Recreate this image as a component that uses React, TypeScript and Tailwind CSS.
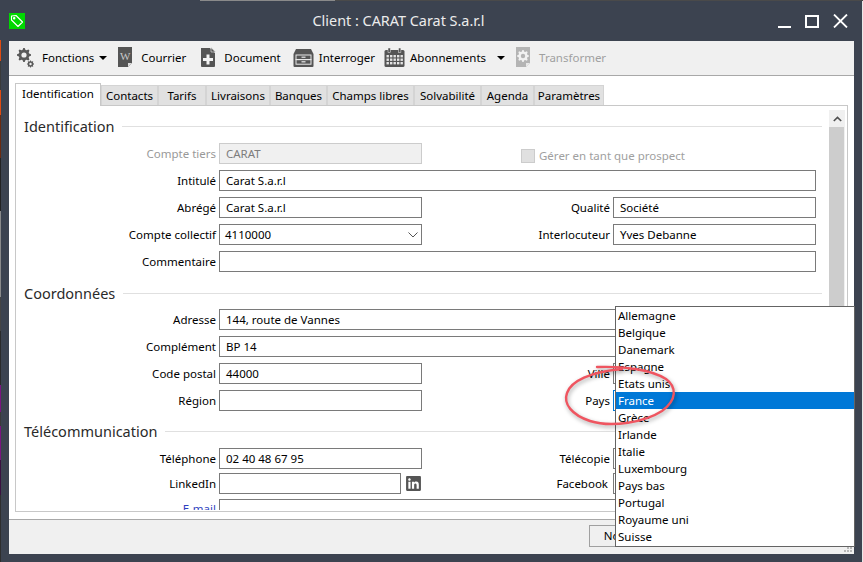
import { FaLinkedin } from 'react-icons/fa';

const gear = (cx: number, cy: number, r: number, teeth = 8) => {
  const pts: string[] = [];
  for (let i = 0; i < teeth * 4; i++) {
    const a = ((i - 0.5) / (teeth * 4)) * Math.PI * 2;
    const rad = i % 4 < 2 ? r : r * 0.76;
    pts.push(`${(cx + Math.cos(a) * rad).toFixed(2)} ${(cy + Math.sin(a) * rad).toFixed(2)}`);
  }
  return 'M' + pts.join('L') + 'Z';
};

const GearsIcon = () => (
  <svg width="17" height="20" viewBox="0 0 17 20" className="shrink-0">
    <path d={gear(7, 7, 7)} fill="#5a5a5a" />
    <circle cx="7" cy="7" r="2.6" fill="#f0f0f0" />
    <path d={gear(13.5, 16, 3.6)} fill="#5a5a5a" />
    <circle cx="13.5" cy="16" r="1.2" fill="#f0f0f0" />
  </svg>
);

const WordIcon = () => (
  <svg width="16" height="21" viewBox="0 0 16 21" className="block shrink-0">
    <path d="M1 0H15V16L11 20H1Z" fill="#555" />
    <path d="M11 20L11 16H15Z" fill="#ddd" />
    <text x="3" y="13" fontSize="11" fontFamily="'Liberation Serif', serif" fill="#c8c8c8">W</text>
  </svg>
);

const DocPlusIcon = () => (
  <svg width="16" height="21" viewBox="0 0 16 21" className="block shrink-0">
    <path d="M1 1H10L15 6V19Q15 20 14 20H2Q1 20 1 19Z" fill="#555" />
    <path d="M11 0.5L15.5 5H11Z" fill="#555" stroke="#f0f0f0" strokeWidth="0.6" />
    <path d="M6.5 7.5H9.5V11H13V14H9.5V17.5H6.5V14H3V11H6.5Z" fill="#f4f4f4" />
  </svg>
);

const CabinetIcon = () => (
  <svg width="21" height="20" viewBox="0 0 21 20" className="block shrink-0">
    <path d="M3 1H18L20.5 6V18Q20.5 19 19.5 19H1.5Q0.5 19 0.5 18V6Z" fill="#555" />
    <rect x="3" y="7" width="15" height="4.6" fill="none" stroke="#e8e8e8" strokeWidth="1" />
    <rect x="3" y="11.6" width="15" height="4.6" fill="none" stroke="#e8e8e8" strokeWidth="1" />
    <rect x="8.5" y="8.6" width="4" height="1.2" fill="#e8e8e8" />
    <rect x="8.5" y="13.2" width="4" height="1.2" fill="#e8e8e8" />
  </svg>
);

const CalendarIcon = () => (
  <svg width="21" height="20" viewBox="0 0 21 20" className="block shrink-0">
    <rect x="0.5" y="2" width="20" height="17" rx="1.5" fill="#555" />
    <rect x="4" y="0" width="2.4" height="4.5" fill="#555" stroke="#f0f0f0" strokeWidth="0.5" />
    <rect x="14.5" y="0" width="2.4" height="4.5" fill="#555" stroke="#f0f0f0" strokeWidth="0.5" />
    {[7, 10.5, 14].map(y =>
      [2.5, 6, 9.5, 13, 16.5].map(x => (
        <rect key={`${x}-${y}`} x={x} y={y} width="2.4" height="2.4" fill="#e4e4e4" />
      ))
    )}
  </svg>
);

const TransformIcon = () => (
  <svg width="16" height="21" viewBox="0 0 16 21" className="block shrink-0">
    <path d="M1 0H15V16L11 20H1Z" fill="#b4b4b4" />
    <path d="M11 20L11 16H15Z" fill="#e8e8e8" />
    <path d={gear(8, 9, 6)} fill="#f2f2f2" />
    <circle cx="8" cy="9" r="2.2" fill="#b4b4b4" />
  </svg>
);

const Caret = () => <span className="block w-0 h-0 border-x-[4px] border-x-transparent border-t-[4px] border-t-black shrink-0" />;

const tabs = [
  { name: 'Contacts', w: 'w-[57px]' },
  { name: 'Tarifs', w: 'w-[48px]' },
  { name: 'Livraisons', w: 'w-[64px]' },
  { name: 'Banques', w: 'w-[57px]' },
  { name: 'Champs libres', w: 'w-[87px]' },
  { name: 'Solvabilité', w: 'w-[67px]' },
  { name: 'Agenda', w: 'w-[53px]' },
  { name: 'Paramètres', w: 'w-[70px]' },
];

const countries = ['Allemagne', 'Belgique', 'Danemark', 'Espagne', 'Etats unis', 'France', 'Grèce', 'Irlande', 'Italie', 'Luxembourg', 'Pays bas', 'Portugal', 'Royaume uni', 'Suisse'];

function Section({ title, className }: { title: string; className: string }) {
  return (
    <div className={`flex items-center h-5 pl-2 pr-[7px] gap-2 ${className}`}>
      <span className="text-[14.5px] leading-5 pb-px text-[#2a2a2a]">{title}</span>
      <span className="flex-1 h-px bg-[#e0e0e0]" />
    </div>
  );
}

function Label({ children, w = 'w-[203px]', extra = '' }: { children?: string; w?: string; extra?: string }) {
  return <span className={`${w} shrink-0 text-right pr-[3px] whitespace-nowrap ${extra}`}>{children}</span>;
}

function Field({ value, wide, className = '' }: { value?: string; wide?: boolean; className?: string }) {
  return (
    <div className={`h-[21px] shrink-0 border border-[#7a7a7a] bg-white pl-[6px] leading-[19px] ${wide ? 'w-[597px]' : 'w-[203px]'} ${className}`}>
      {value}
    </div>
  );
}

export default function App() {
  return (
    <div className="relative w-[863px] h-[562px] overflow-hidden flex flex-col bg-[#4a4a4a] text-[11.5px] text-black font-['Noto_Sans',sans-serif]">
      <div className="h-px flex shrink-0">
        <div className="w-[200px] bg-[#3c4350]" />
        <div className="w-[135px] bg-[#8a8a8a]" />
      </div>
      <div className="flex flex-1 min-h-0">
        <div className="w-px flex flex-col bg-[#2e2e2e]">
          <div className="h-[39px] bg-[#3c4350]" />
          <div className="h-[21px] bg-[#e04a10]" />
          <div className="h-[29px] bg-[#3a3a3a]" />
          <div className="h-[25px] bg-[#e04a10]" />
          <div className="h-[43px] bg-[#6a2a10]" />
          <div className="h-[53px] bg-[#222]" />
          <div className="h-[86px] bg-[#8a8a8a]" />
          <div className="h-[34px] bg-[#444]" />
          <div className="h-[54px] bg-[#2a2a2a]" />
          <div className="h-[27px] bg-[#7a1480]" />
          <div className="h-[14px] bg-[#3a3a3a]" />
          <div className="h-[34px] bg-[#7a1480]" />
          <div className="h-[35px] bg-[#3a1040]" />
        </div>

        <div className="w-[861px] h-[561px] flex flex-col bg-[#3c4350]">
          <div className="h-10 shrink-0 flex items-center">
            <div className="ml-2 w-4 h-4 bg-[#00d800] shrink-0">
              <svg width="16" height="16" viewBox="0 0 16 16" fill="none" stroke="#fff" strokeWidth="1.1">
                <path d="M2.5 3L7 2.5L13.5 9L9 13.5L2.5 7Z" strokeLinejoin="round" />
                <circle cx="5.2" cy="5.2" r="0.7" fill="#fff" />
              </svg>
            </div>
            <div className="w-[747px] text-center text-[14.4px] text-[#ececec] whitespace-nowrap">Client : CARAT Carat S.a.r.l</div>
            <div className="w-[13px] h-[2px] bg-white self-end mb-[13px] ml-[6px] shrink-0" />
            <div className="w-[14px] h-[13px] border-2 border-white ml-[14px] shrink-0" />
            <svg width="15" height="14" viewBox="0 0 15 14" stroke="#fff" strokeWidth="1.8" className="ml-[14px] shrink-0">
              <path d="M1 0.5L14 13.5M14 0.5L1 13.5" />
            </svg>
          </div>

          <div className="flex-1 min-h-0 ml-2 mr-2 mb-2 flex flex-col bg-white">
            {/* barre d'outils */}
            <div className="h-[35px] shrink-0 bg-[#f0f0f0] border-b border-[#a8a8a8] flex items-center pl-[8px] pb-[1px]">
              <GearsIcon />
              <span className="ml-2">Fonctions</span>
              <span className="ml-[5px]"><Caret /></span>
              <span className="ml-[10px]"><WordIcon /></span>
              <span className="ml-2">Courrier</span>
              <span className="ml-[14px]"><DocPlusIcon /></span>
              <span className="ml-2">Document</span>
              <span className="ml-3"><CabinetIcon /></span>
              <span className="ml-[5px]">Interroger</span>
              <span className="ml-[9px]"><CalendarIcon /></span>
              <span className="ml-[5px]">Abonnements</span>
              <span className="ml-[11px]"><Caret /></span>
              <span className="ml-[10px]"><TransformIcon /></span>
              <span className="ml-2 text-[#a0a0a0]">Transformer</span>
            </div>

            {/* onglets */}
            <div className="flex items-end pl-[6px] pt-[7px] shrink-0">
              <div className="relative z-10 w-[86px] h-[23px] -mb-px bg-white border border-b-0 border-[#c8c8c8] text-center leading-[20px]">Identification</div>
              {tabs.map(t => (
                <div key={t.name} className={`${t.w} h-[20px] bg-[#e1e1e1] border border-b-0 border-[#d4d4d4] text-center leading-[19px] whitespace-nowrap`}>
                  {t.name}
                </div>
              ))}
            </div>

            <div className="ml-[6px] w-[833px] h-[407px] border border-[#c8c8c8] flex shrink-0">
              <div className="w-[813px] h-[404px] overflow-hidden shrink-0">
                <Section title="Identification" className="mt-[10px]" />
                <div className="mt-[7px] flex flex-col gap-[6px]">
                  <div className="flex items-center">
                    <Label extra="text-[#999]">Compte tiers</Label>
                    <Field value="CARAT" className="!bg-[#f0f0f0] !border-[#ccc] text-[#7d7d7d]" />
                    <span className="ml-[99px] mt-[4px] w-[14px] h-[14px] bg-[#e0e0e0] border border-[#ccc] shrink-0" />
                    <span className="ml-[4px] mt-[4px] text-[#a0a0a0] whitespace-nowrap">Gérer en tant que prospect</span>
                  </div>
                  <div className="flex items-center">
                    <Label>Intitulé</Label>
                    <Field value="Carat S.a.r.l" wide />
                  </div>
                  <div className="flex items-center">
                    <Label>Abrégé</Label>
                    <Field value="Carat S.a.r.l" />
                    <Label w="w-[191px]">Qualité</Label>
                    <Field value="Société" />
                  </div>
                  <div className="flex items-center">
                    <Label>Compte collectif</Label>
                    <div className="w-[203px] h-[21px] shrink-0 border border-[#7a7a7a] pl-[5px] pr-[3px] leading-[19px] flex items-center justify-between">
                      <span>4110000</span>
                      <svg width="10" height="6" viewBox="0 0 10 6" fill="none" stroke="#555" strokeWidth="1">
                        <path d="M0.5 0.5L5 5L9.5 0.5" />
                      </svg>
                    </div>
                    <Label w="w-[191px]">Interlocuteur</Label>
                    <Field value="Yves Debanne" />
                  </div>
                  <div className="flex items-center">
                    <Label>Commentaire</Label>
                    <Field wide />
                  </div>
                </div>

                <Section title="Coordonnées" className="mt-[11px]" />
                <div className="mt-[6px] flex flex-col gap-[6px]">
                  <div className="flex items-center">
                    <Label>Adresse</Label>
                    <Field value="144, route de Vannes" wide />
                  </div>
                  <div className="flex items-center">
                    <Label>Complément</Label>
                    <Field value="BP 14" wide />
                  </div>
                  <div className="flex items-center">
                    <Label>Code postal</Label>
                    <Field value="44000" />
                    <Label w="w-[191px]">Ville</Label>
                    <Field />
                  </div>
                  <div className="flex items-center">
                    <Label>Région</Label>
                    <Field />
                    <Label w="w-[191px]">Pays</Label>
                    <Field className="!border-[#0078d7]" />
                  </div>
                </div>

                <Section title="Télécommunication" className="mt-[10px]" />
                <div className="mt-[7px] flex items-center">
                  <Label>Téléphone</Label>
                  <Field value="02 40 48 67 95" />
                  <Label w="w-[191px]">Télécopie</Label>
                  <Field />
                </div>
                <div className="mt-[4px] flex items-center">
                  <Label>LinkedIn</Label>
                  <Field className="!w-[182px]" />
                  <FaLinkedin className="ml-1 shrink-0 text-[#555] text-[17px]" />
                  <Label w="w-[191px]" extra="!pr-[5px]">Facebook</Label>
                  <Field />
                </div>
                <div className="mt-[5px] flex items-start">
                  <Label extra="text-[#2f3fc0] underline leading-[20px]">E-mail</Label>
                  <Field wide />
                </div>
              </div>

              <div className="w-4 mt-1 mb-[2px] bg-[#f0f0f0] flex flex-col shrink-0">
                <div className="h-[17px] flex items-center justify-center">
                  <svg width="9" height="6" viewBox="0 0 9 6" fill="none" stroke="#505050" strokeWidth="1.6">
                    <path d="M0.8 5L4.5 1.4L8.2 5" />
                  </svg>
                </div>
                <div className="flex-1 w-[15px] bg-[#cdcdcd]" />
              </div>
            </div>

            {/* boutons du bas */}
            <div className="mt-[7px] flex-1 bg-[#f0f0f0] border-t border-[#a8a8a8] flex justify-end gap-1 pt-[5px] pr-[23px]">
              <button className="w-[78px] h-[22px] border border-[#a0a0a0] bg-[#f0f0f0]">Nouveau</button>
              <button className="w-[78px] h-[22px] border border-[#a0a0a0] bg-[#f0f0f0]" />
              <button className="w-[78px] h-[22px] border border-[#a0a0a0] bg-[#f0f0f0]" />
            </div>
          </div>
        </div>

        <div className="w-px bg-[#e8e8e8]" />
      </div>

      {/* liste déroulante ouverte */}
      <div className="absolute left-[615px] top-[306px] w-[240px] border border-[#646464] bg-white">
        {countries.map(c => (
          <div key={c} className={`h-[17px] pl-[2px] leading-[17px] ${c === 'France' ? 'bg-[#0078d7] text-white' : ''}`}>
            {c}
          </div>
        ))}
        <div className="h-px" />
      </div>
      <svg width="9" height="6" viewBox="0 0 9 6" fill="#b8b8b8" className="absolute left-[844px] top-[547px]">
        <rect x="6" y="0" width="2" height="2" />
        <rect x="3" y="0" width="2" height="2" />
        <rect x="3" y="3" width="2" height="2" />
        <rect x="6" y="3" width="2" height="2" />
        <rect x="0" y="3" width="2" height="2" />
      </svg>

      {/* entourage rouge */}
      <svg width="130" height="75" viewBox="555 360 130 75" fill="none" className="absolute left-[555px] top-[360px] drop-shadow-[1px_2px_2px_rgba(0,0,0,0.35)]">
        <path
          d="M597 367C625 366 652 370 666 379C677 387 677 400 662 411C645 422 612 428 590 421C572 415 563 404 567 393C571 381 590 372 622 369"
          stroke="#ef5560"
          strokeWidth="2.4"
          strokeLinecap="round"
        />
      </svg>
    </div>
  );
}
